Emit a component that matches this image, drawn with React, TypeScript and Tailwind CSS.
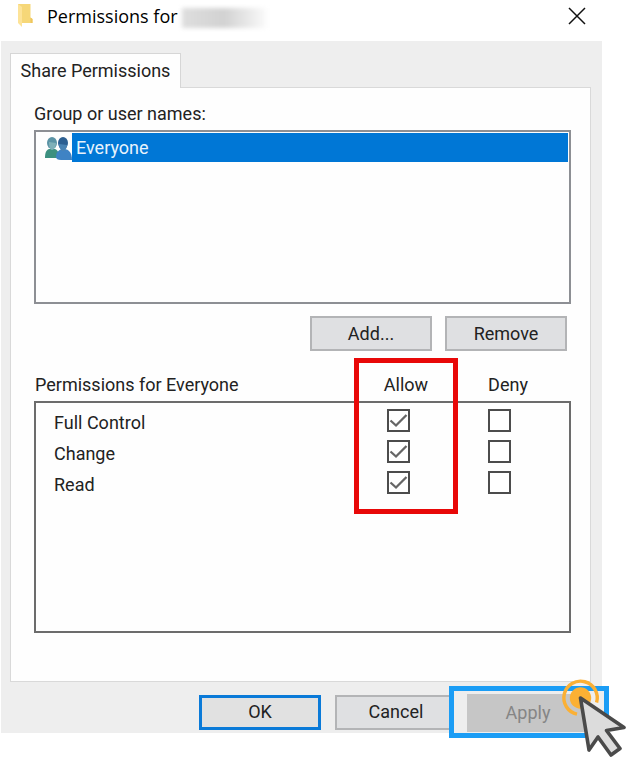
import { useState } from "react";

interface Permission {
  name: string;
  allow: boolean;
  deny: boolean;
}

const DEFAULT_PERMISSIONS: Permission[] = [
  { name: "Full Control", allow: true, deny: false },
  { name: "Change", allow: true, deny: false },
  { name: "Read", allow: true, deny: false },
];

const buttonStyle =
  "h-[35px] w-[122px] border-2 border-[#b3b4b6] bg-[#dfe0e2] text-[#222]";

function FolderIcon() {
  return (
    <svg width="18" height="24" viewBox="0 0 18 24" aria-hidden="true">
      <path d="M1 0h12.5v13.5l2 1.5v4H5L1 18z" fill="#f6d778" />
      <path d="M13.5 13.5l2 1.5v4h-2z" fill="#eec65e" />
      <path d="M1 0l4 3v20l-4-4z" fill="#fde398" />
    </svg>
  );
}

function UsersIcon() {
  return (
    <svg width="28" height="26" viewBox="0 0 28 26" aria-hidden="true">
      <path d="M1 23c0-5 1-8 4-9h6c3 1 4 4 4 9z" fill="#3d9080" />
      <ellipse cx="8" cy="8" rx="5" ry="6" fill="#5b93a5" />
      <path d="M5 7c0 5 1 8 3 8s4-3 4-7z" fill="#7fb0b8" />
      <path d="M12 22c0-5 3-8 8-8s8 4 8 11H17c-3 0-5-1-5-3z" fill="#3f83c4" />
      <ellipse cx="19" cy="8" rx="5" ry="6" fill="#2d5f91" />
      <path d="M15 9c0 4 2 7 4 7s4-3 4-6z" fill="#4a83b3" />
    </svg>
  );
}

function ClickPointer() {
  return (
    <svg
      className="pointer-events-none absolute -top-[13px] -right-[22px]"
      width="66"
      height="80"
      viewBox="0 0 66 80"
      aria-hidden="true"
    >
      <path
        d="M17 36.2A16.7 16.7 0 1 1 36.6 24.5"
        fill="none"
        stroke="#fbb034"
        strokeWidth="3.4"
      />
      <circle cx="20.5" cy="20" r="10.7" fill="#fbb034" />
      <path
        d="M20.5 20L64 49.5L46.5 52.5L60 70.5L51 77L38 59L29 72Z"
        fill="#dcdcdc"
        stroke="#4a4a4a"
        strokeWidth="3.6"
        strokeLinejoin="round"
      />
    </svg>
  );
}

function CheckBox({ label, checked, onChange }: any) {
  return (
    <div className="mx-auto grid w-fit">
      <input
        type="checkbox"
        aria-label={label}
        checked={checked}
        onChange={onChange}
        className="col-start-1 row-start-1 size-[23px] appearance-none border-2 border-[#4c4c4c] bg-white"
      />
      {checked && (
        <svg
          className="pointer-events-none col-start-1 row-start-1"
          width="23"
          height="23"
          viewBox="0 0 23 23"
          aria-hidden="true"
        >
          <path
            d="M3.5 11.5L9 16.5L19.5 6"
            fill="none"
            stroke="#666"
            strokeWidth="2.3"
          />
        </svg>
      )}
    </div>
  );
}

export default function App() {
  const [permissions, setPermissions] = useState(DEFAULT_PERMISSIONS);

  const toggle = (index: number, key: "allow" | "deny") => {
    setPermissions(
      permissions.map((item, i) =>
        i === index ? { ...item, [key]: !item[key] } : item
      )
    );
  };

  return (
    <div className="min-h-screen bg-white pr-6 pl-px font-[Roboto,'Liberation_Sans',sans-serif] text-[18px] leading-6 text-[#222]">
      <header className="flex h-[41px] items-start pt-1 pr-4 pl-4">
        <FolderIcon />
        <h1 className="ml-3 font-['Open_Sans','Noto_Sans',sans-serif] text-[18px] leading-6 text-black">
          Permissions for
        </h1>
        <span className="mt-1 ml-1 h-[20px] w-[84px] bg-linear-to-r from-[#dedede] via-[#d2d2d2] to-[#fafafa] blur-[2px]"></span>
        <button type="button" aria-label="Close" className="mt-[3px] ml-auto">
          <svg width="18" height="18" viewBox="0 0 18 18" aria-hidden="true">
            <path
              d="M1 1L17 17M17 1L1 17"
              stroke="#111"
              strokeWidth="1.5"
              fill="none"
            />
          </svg>
        </button>
      </header>

      <main className="bg-[#eee] pt-3 pr-[11px] pb-[2px] pl-[9px]">
        <div role="tablist" className="flex">
          <button
            type="button"
            role="tab"
            aria-selected="true"
            className="z-10 -mb-px h-[35px] w-[171px] border border-b-0 border-[#d6d6d6] bg-[#fefefe]"
          >
            Share Permissions
          </button>
        </div>

        <section className="border border-[#d9d9d9] bg-[#fefefe] pt-[14px] pr-[19px] pb-12 pl-[23px]">
          <h2>Group or user names:</h2>
          <ul className="mt-1 h-[174px] border-2 border-[#8d8f94] pt-px pr-px pl-2">
            <li className="flex h-[29px] items-center">
              <UsersIcon />
              <span className="flex h-full grow items-center bg-[#0077d6] pl-1 text-[#e8f3fc]">
                Everyone
              </span>
            </li>
          </ul>

          <div className="mt-3 flex justify-end gap-[13px] pr-1">
            <button type="button" className={buttonStyle}>
              Add...
            </button>
            <button type="button" className={buttonStyle}>
              Remove
            </button>
          </div>

          <table className="mt-[18px] w-full border-collapse">
            <thead>
              <tr className="h-[33px]">
                <th className="text-left font-normal">
                  Permissions for Everyone
                </th>
                <th className="relative w-[104px] font-normal">
                  Allow
                  <span className="pointer-events-none absolute -top-[11px] left-0 z-10 h-[156px] w-[104px] border-5 border-[#e80808]"></span>
                </th>
                <th className="w-[112px] pr-3 font-normal">Deny</th>
              </tr>
            </thead>
            <tbody className="border-2 border-[#6c6c6c]">
              <tr aria-hidden="true" className="h-[5px]"></tr>
              {permissions.map((item, index) => (
                <tr key={item.name} className="h-[31px]">
                  <th scope="row" className="pl-[18px] text-left font-normal">
                    {item.name}
                  </th>
                  <td className="pr-4 pb-1">
                    <CheckBox
                      label={`Allow ${item.name}`}
                      checked={item.allow}
                      onChange={() => toggle(index, "allow")}
                    />
                  </td>
                  <td className="pr-7 pb-1">
                    <CheckBox
                      label={`Deny ${item.name}`}
                      checked={item.deny}
                      onChange={() => toggle(index, "deny")}
                    />
                  </td>
                </tr>
              ))}
              <tr aria-hidden="true" className="h-[132px]"></tr>
            </tbody>
          </table>
        </section>

        <footer className="-mr-[18px] -mb-[7px] flex items-center justify-end pt-1">
          <button
            type="button"
            className="mr-[14px] h-[35px] w-[122px] border-3 border-[#0a7ad8] bg-[#e1e1e1]"
          >
            OK
          </button>
          <button type="button" className={buttonStyle}>
            Cancel
          </button>
          <div className="relative -ml-2 h-[52px] w-[160px] border-5 border-[#1b9df5] bg-[#eee] pt-[3px] pr-[15px] pb-px pl-[13px]">
            <button
              type="button"
              className="size-full bg-[#c6c6c6] text-[#858585]"
            >
              Apply
            </button>
            <ClickPointer />
          </div>
        </footer>
      </main>
    </div>
  );
}
